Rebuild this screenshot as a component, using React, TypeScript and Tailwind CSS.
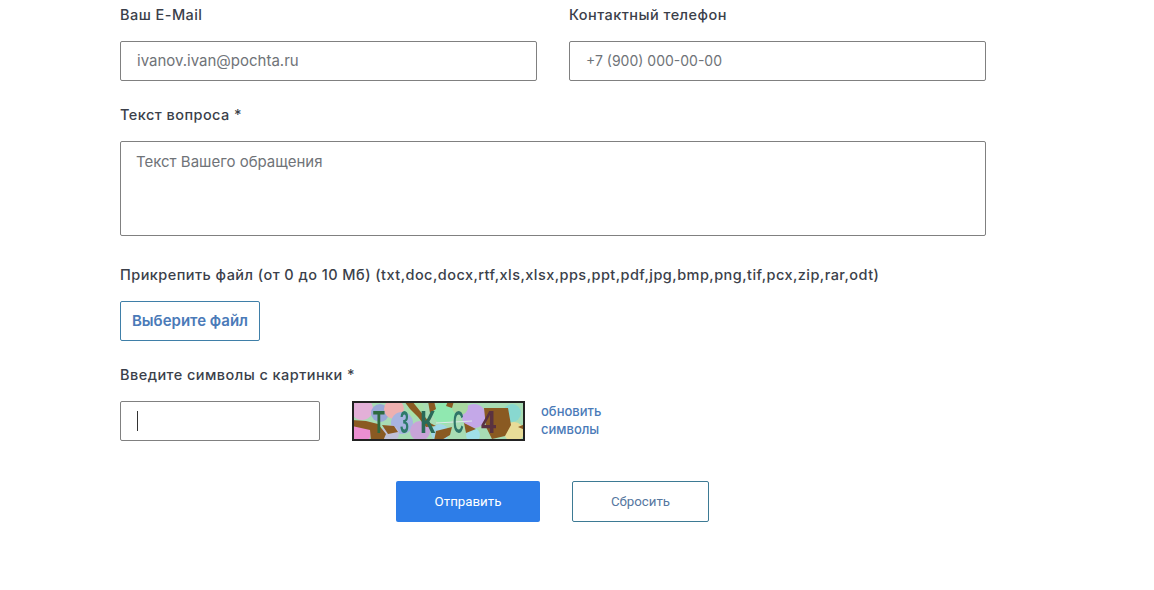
const Captcha = () => (
  <svg width="173" height="40" viewBox="0 0 173 40" className="block shrink-0">
    <defs>
      <filter id="soft" filterUnits="userSpaceOnUse" x="0" y="0" width="173" height="40">
        <feGaussianBlur stdDeviation="0.7" />
      </filter>
    </defs>
    <g filter="url(#soft)">
      <rect width="173" height="40" fill="#a8dcb4" />
      <circle cx="10" cy="8" r="11" fill="#e3b0d8" />
      <circle cx="9" cy="32" r="10" fill="#ec8fd2" />
      <circle cx="28" cy="12" r="9" fill="#98a8d8" />
      <circle cx="42" cy="8" r="10" fill="#eeb0b0" />
      <circle cx="50" cy="22" r="11" fill="#a8b4e0" />
      <circle cx="38" cy="33" r="9" fill="#c0c0d8" />
      <circle cx="68" cy="30" r="10" fill="#c8a4d8" />
      <circle cx="64" cy="8" r="8" fill="#a8e0a8" />
      <circle cx="92" cy="12" r="11" fill="#90e8b0" />
      <circle cx="88" cy="32" r="9" fill="#a0d8e8" />
      <circle cx="122" cy="15" r="12" fill="#c4a8e8" />
      <circle cx="108" cy="6" r="8" fill="#a8d8a0" />
      <circle cx="121" cy="34" r="7" fill="#a0e0e8" />
      <circle cx="160" cy="12" r="9" fill="#88d8d0" />
      <circle cx="162" cy="31" r="10" fill="#e8dc98" />
      <path d="M0 19l14 1 12 3 8 10-3 7H19l-1-11-18-4zM30 24l12 1 4 6-10 2z" fill="#8a5a24" />
      <path d="M52 0h8l8 10 10 12 6 3-10 1-8-10-8-8zM76 0h6l2 8-6 4zM84 30l16-4-2 8-10 6h-6z" fill="#8a5a24" />
      <path d="M96 0h6l-2 7-6-2zM112 22l12 6-10 4zM132 7h24l3 17-6 11-13 3-6-12z" fill="#8a5a24" />
      <path d="M166 26l7-3v6z" fill="#8a5a24" />
      <path d="M84 22l36-2" stroke="#dce8e8" strokeWidth="1" fill="none" />
    </g>
    <g fontFamily="'Liberation Sans', sans-serif" fontWeight="700" filter="url(#soft)">
      <text fontSize="32" fill="#2f6b3f" transform="translate(21 32) scale(0.6 1)">Т</text>
      <text fontSize="32" fill="#2f7a6a" transform="translate(48 32) scale(0.5 1)">3</text>
      <text fontSize="32" fill="#2a6a58" transform="translate(68 32) scale(0.78 1)">К</text>
      <text fontSize="32" fill="#2f7468" transform="translate(101 32) scale(0.46 1)">С</text>
      <text fontSize="32" fill="#5a3040" transform="translate(129 32) scale(0.85 1)">4</text>
    </g>
    <rect x="1" y="1" width="171" height="38" fill="none" stroke="#222" strokeWidth="2" />
  </svg>
);

const labelClass = "block h-[35px] leading-[18px] text-[14.5px] tracking-[0.45px] font-medium text-[#3b3f4a]";

export default function App() {
  return (
    <div className="h-[590px] bg-white pl-[120px] font-['Inter',sans-serif] text-[14px] overflow-hidden">
      <div className="w-[866px]">
        <div className="grid grid-cols-[417px_417px] gap-x-8 pt-[6px]">
          <div>
            <label className={labelClass}>Ваш E-Mail</label>
            <input readOnly placeholder="ivanov.ivan@pochta.ru" className="w-full h-10 border border-[#808080] rounded-[2px] px-4 pb-[2px] text-[15px] placeholder:text-[#6f7378] outline-none" />
          </div>
          <div>
            <label className={labelClass}>Контактный телефон</label>
            <input readOnly placeholder="+7 (900) 000-00-00" className="w-full h-10 border border-[#808080] rounded-[2px] px-4 pb-[2px] text-[14px] placeholder:text-[#6f7378] outline-none" />
          </div>
        </div>
        <label className={`${labelClass} mt-[25px]`}>Текст вопроса *</label>
        <textarea readOnly placeholder="Текст Вашего обращения" className="block w-full h-[95px] border border-[#808080] rounded-[2px] pl-[15px] pr-4 py-[10px] text-[15px] leading-5 placeholder:text-[#6f7378] outline-none resize-none" />
        <label className={`${labelClass} mt-[30px]`}>Прикрепить файл (от 0 до 10 Мб) (txt,doc,docx,rtf,xls,xlsx,pps,ppt,pdf,jpg,bmp,png,tif,pcx,zip,rar,odt)</label>
        <button className="block h-10 w-[140px] border border-[#3f7fa8] rounded-[2px] pt-[1px] text-[15px] text-[#4a7ab8] font-semibold">Выберите файл</button>
        <label className={`${labelClass} mt-[25px]`}>Введите символы с картинки *</label>
        <div className="flex items-center">
          <div className="w-[200px] h-10 border border-[#808080] rounded-[2px] flex items-center pl-4">
            <span className="w-px h-5 bg-[#333]" />
          </div>
          <div className="ml-8"><Captcha /></div>
          <a className="ml-4 mb-[2px] text-[13px] leading-[18px] font-medium text-[#4a7ab8]">обновить<br />символы</a>
        </div>
        <div className="flex mt-10 ml-[276px] gap-8 font-['Roboto',sans-serif] text-[13.3px]">
          <button className="w-[144px] h-[41px] bg-[#2d7de8] rounded-[2px] text-white">Отправить</button>
          <button className="w-[137px] h-[41px] border border-[#3d7a94] rounded-[2px] text-[#56779f]">Сбросить</button>
        </div>
      </div>
    </div>
  );
}
